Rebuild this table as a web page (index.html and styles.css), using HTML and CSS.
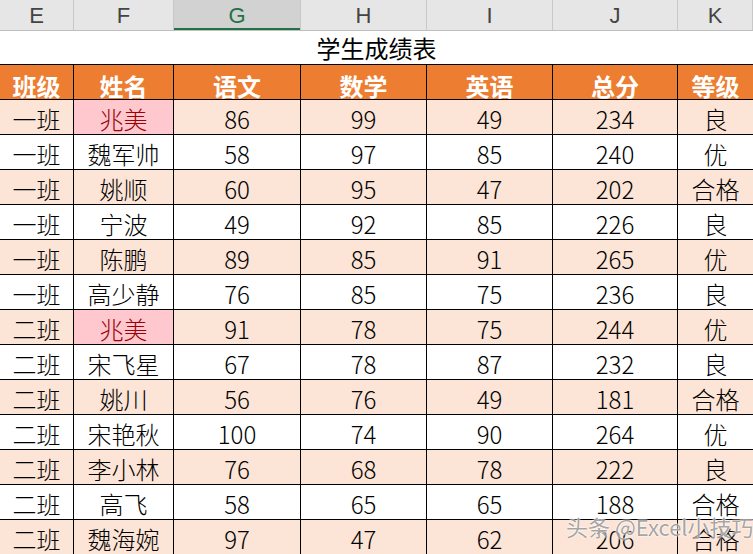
FILE: index.html
```html
<!DOCTYPE html>
<html lang="zh">
<head>
<meta charset="utf-8">
<link rel="stylesheet" href="styles.css">
</head>
<body>
<div class="sheet">
  <div class="row colhead">
    <div class="c">E</div><div class="c">F</div><div class="c sel">G</div><div class="c">H</div><div class="c">I</div><div class="c">J</div><div class="c">K</div>
  </div>
  <div class="title">学生成绩表</div>
  <div class="row head">
    <div class="c">班级</div><div class="c">姓名</div><div class="c">语文</div><div class="c">数学</div><div class="c">英语</div><div class="c">总分</div><div class="c">等级</div>
  </div>
  <div class="row data alt"><div class="c">一班</div><div class="c dup">兆美</div><div class="c">86</div><div class="c">99</div><div class="c">49</div><div class="c">234</div><div class="c">良</div></div>
  <div class="row data"><div class="c">一班</div><div class="c">魏军帅</div><div class="c">58</div><div class="c">97</div><div class="c">85</div><div class="c">240</div><div class="c">优</div></div>
  <div class="row data alt"><div class="c">一班</div><div class="c">姚顺</div><div class="c">60</div><div class="c">95</div><div class="c">47</div><div class="c">202</div><div class="c">合格</div></div>
  <div class="row data"><div class="c">一班</div><div class="c">宁波</div><div class="c">49</div><div class="c">92</div><div class="c">85</div><div class="c">226</div><div class="c">良</div></div>
  <div class="row data alt"><div class="c">一班</div><div class="c">陈鹏</div><div class="c">89</div><div class="c">85</div><div class="c">91</div><div class="c">265</div><div class="c">优</div></div>
  <div class="row data"><div class="c">一班</div><div class="c">高少静</div><div class="c">76</div><div class="c">85</div><div class="c">75</div><div class="c">236</div><div class="c">良</div></div>
  <div class="row data alt"><div class="c">二班</div><div class="c dup">兆美</div><div class="c">91</div><div class="c">78</div><div class="c">75</div><div class="c">244</div><div class="c">优</div></div>
  <div class="row data"><div class="c">二班</div><div class="c">宋飞星</div><div class="c">67</div><div class="c">78</div><div class="c">87</div><div class="c">232</div><div class="c">良</div></div>
  <div class="row data alt"><div class="c">二班</div><div class="c">姚川</div><div class="c">56</div><div class="c">76</div><div class="c">49</div><div class="c">181</div><div class="c">合格</div></div>
  <div class="row data"><div class="c">二班</div><div class="c">宋艳秋</div><div class="c">100</div><div class="c">74</div><div class="c">90</div><div class="c">264</div><div class="c">优</div></div>
  <div class="row data alt"><div class="c">二班</div><div class="c">李小林</div><div class="c">76</div><div class="c">68</div><div class="c">78</div><div class="c">222</div><div class="c">良</div></div>
  <div class="row data"><div class="c">二班</div><div class="c">高飞</div><div class="c">58</div><div class="c">65</div><div class="c">65</div><div class="c">188</div><div class="c">合格</div></div>
  <div class="row data alt"><div class="c">二班</div><div class="c">魏海婉</div><div class="c">97</div><div class="c">47</div><div class="c">62</div><div class="c">206</div><div class="c">合格</div></div>
  <div class="watermark">头条 @Excel小技巧</div>
</div>
</body>
</html>
```
FILE: styles.css
```css
html, body {
  margin: 0;
  padding: 0;
  background: #fff;
  overflow: hidden;
}
.sheet {
  position: relative;
  width: 753px;
  height: 554px;
  overflow: hidden;
  font-family: "Noto Sans CJK SC", "Noto Sans", sans-serif;
  color: #000;
}
.row {
  display: grid;
  grid-template-columns: 74px 100px 127px 126px 126px 125px 75px;
}
.c {
  box-sizing: border-box;
  display: flex;
  align-items: center;
  justify-content: center;
  border-right: 1px solid #000;
  white-space: nowrap;
}
.c:last-child { border-right: none; }
.colhead {
  height: 31px;
  background: #e6e6e6;
  border-bottom: 1px solid #bfbfbf;
  box-sizing: border-box;
}
.colhead .c {
  border-right: 1px solid #c8c8c8;
  font-family: "Liberation Sans", sans-serif;
  font-size: 22px;
  color: #444;
  padding-top: 2px;
}
.colhead .c.sel {
  background: #d2d2d2;
  color: #217346;
  box-shadow: inset 0 -2px 0 #217346;
}
.title {
  height: 34px;
  box-sizing: border-box;
  border-bottom: 1px solid #000;
  display: flex;
  align-items: center;
  justify-content: center;
  font-size: 24px;
  line-height: 1;
}
.head {
  height: 35px;
  background: #ed7d31;
  color: #fff;
  font-weight: bold;
  font-size: 24px;
  border-bottom: 1px solid #000;
  box-sizing: border-box;
}
.head .c { padding-top: 3px; }
.data {
  height: 35px;
  box-sizing: border-box;
  border-bottom: 1px solid #000;
  font-size: 24px;
  line-height: 1;
}
.data .c { font-weight: 300; padding-top: 3px; }
.data.alt { background: #fce4d6; }
.data .c.dup {
  background: #ffc7ce;
  color: #9c0006;
}
.watermark {
  position: absolute;
  left: 566px;
  top: 510px;
  font-size: 22px;
  color: rgba(90, 90, 90, 0.55);
  text-shadow: 0 0 2px #fff, 0 0 2px #fff;
  white-space: nowrap;
}
```
